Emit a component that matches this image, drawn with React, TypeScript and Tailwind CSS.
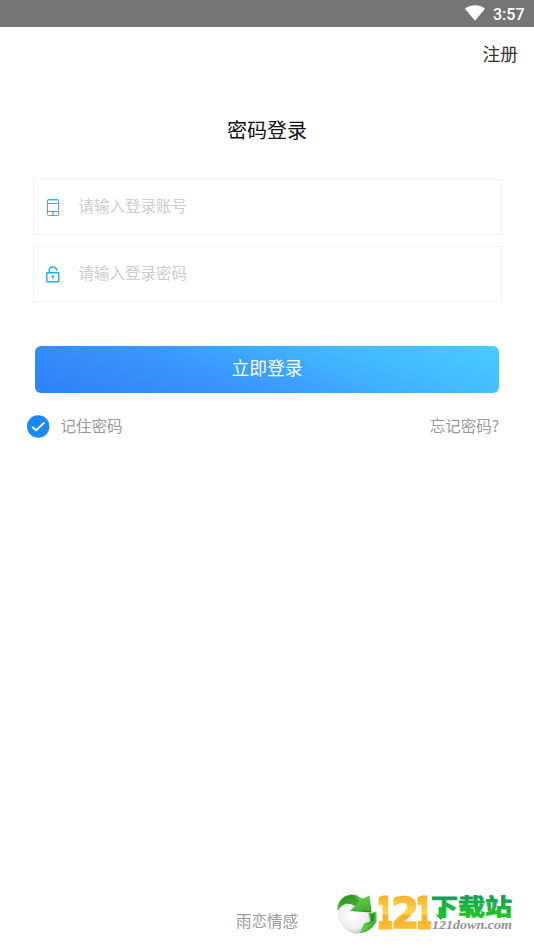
import React from 'react';

const PhoneIcon = () => (
  <svg width="12" height="17" viewBox="0 0 12 17" fill="none" stroke="#35abf8" className="mr-px shrink-0">
    <rect x="0.5" y="0.5" width="11" height="16" rx="1" strokeWidth="1" />
    <path d="M1 4.5H11M1 12.5H11" strokeWidth="1" />
    <path d="M1 1.5H11" strokeWidth="1" stroke="#a9dafc" />
    <path d="M6 13V16" strokeWidth="1.3" />
  </svg>
);

const LockIcon = () => (
  <svg width="14" height="17" viewBox="0 0 14 17" fill="none" stroke="#22a9fb" className="shrink-0">
    <rect x="0.8" y="6.7" width="12" height="9" rx="0.6" strokeWidth="1.4" />
    <path d="M3.2 6.5V4.8C3.2 2.5 4.8 1 6.9 1C8.8 1 10.4 2.1 10.8 4.4" strokeWidth="1.4" strokeLinecap="round" />
    <path d="M6.8 10V13.2" strokeWidth="1.2" />
    <path d="M5.4 10.2H8.2" strokeWidth="1.6" />
  </svg>
);

const Field = ({ icon, label }: { icon: React.ReactNode; label: string }) => (
  <div className="flex h-14 items-center border border-[#f2f2f2]">
    <div className="flex h-full w-[38px] items-center justify-center pt-px">{icon}</div>
    <span className="mb-[5px] ml-[6.5px] text-[15.5px] leading-6 text-[#cccccc]">{label}</span>
  </div>
);

const SiteLogo = () => (
  <svg width="180" height="50" viewBox="335 889 180 50" className="overflow-visible">
    <defs>
      <radialGradient id="ball" cx="0.4" cy="0.45" r="0.62">
        <stop offset="0" stopColor="#ffffff" />
        <stop offset="0.65" stopColor="#eeeeee" />
        <stop offset="1" stopColor="#b5b5b5" />
      </radialGradient>
      <linearGradient id="leaf" x1="0" y1="0" x2="1" y2="1">
        <stop offset="0" stopColor="#1d7b14" />
        <stop offset="0.5" stopColor="#65cc4c" />
        <stop offset="1" stopColor="#168817" />
      </linearGradient>
      <linearGradient id="gold" gradientUnits="userSpaceOnUse" x1="0" y1="-33" x2="0" y2="0">
        <stop offset="0" stopColor="#f6b22c" />
        <stop offset="0.55" stopColor="#ffd650" />
        <stop offset="0.62" stopColor="#f8b023" />
        <stop offset="1" stopColor="#fcbd35" />
      </linearGradient>
      <linearGradient id="green" gradientUnits="userSpaceOnUse" x1="0" y1="896" x2="0" y2="919">
        <stop offset="0" stopColor="#129e5b" />
        <stop offset="1" stopColor="#1dcc18" />
      </linearGradient>
    </defs>
    <path d="M338 906C344 900 358 900 366 908L375 918C371 930 363 934 355 933.5C347 932 340 926 338 917Z" fill="url(#ball)" />
    <path d="M337.5 911C336.5 903 342 896 349 895C353 894 356 894.5 359 897L363 898.5L369.5 895.5L371.5 912.5L350 911L355 906C348 901.5 342 904 337.5 911Z" fill="url(#leaf)" />
    <path d="M341 901C344 897 349 895 354 896L360 901L355 906C349 902 343 903 339 907Z" fill="#2c9a1f" opacity="0.7" />
    <path d="M359 901L369 898L370.5 911L355 909.5L361 905Z" fill="#54bd3c" opacity="0.7" />
    <path d="M368.5 913.5L376.5 911.5V921.5C372 929 367 933 359.5 933L364.5 923L370 921.5Z" fill="url(#leaf)" />
    <path d="M370.5 914.5L375 913L374 920.5L366 926L371 921Z" fill="#229318" />
    <g fill="url(#gold)" stroke="url(#gold)" className="font-['DejaVu_Sans',sans-serif] text-[43px] font-bold">
      <text transform="translate(377 928.4) scale(.53 1)" strokeWidth="3">1</text>
      <text transform="translate(390.9 928.4) scale(.95 1)" strokeWidth="1.4">2</text>
      <text transform="translate(416 928.4) scale(.53 1)" strokeWidth="3">1</text>
    </g>
    <text x="431" y="914.5" fill="url(#green)" stroke="url(#green)" strokeWidth="0.8" textLength="81" lengthAdjust="spacingAndGlyphs" className="font-['Noto_Sans_CJK_SC',sans-serif] text-[22.5px] font-bold">下载站</text>
    <path d="M438.6 907H443V914.5H446L440.8 920L435.5 914.5H438.6Z" fill="#20bd24" />
    <text x="432" y="929" fill="#929292" textLength="80" lengthAdjust="spacingAndGlyphs" className="font-['Liberation_Serif',serif] text-[13px] font-bold italic">121down.com</text>
  </svg>
);

export default function App() {
  return (
    <main className="flex h-[949px] w-full flex-col overflow-hidden bg-white font-['Noto_Sans_CJK_SC',sans-serif]">
      <header className="flex h-[27px] shrink-0 items-center justify-end bg-[#757575] pr-[9.5px] text-white">
        <svg width="20" height="16" viewBox="0 0 20 16" className="mr-2 mb-px">
          <path d="M0 3.7C5.5-.8 14.5-.8 20 3.7L10 15.8Z" fill="currentColor" />
        </svg>
        <span className="pt-[2px] font-[Roboto,sans-serif] text-base leading-5 font-medium">3:57</span>
      </header>
      <nav className="flex h-[53px] shrink-0 items-center justify-end pr-4 pb-[2px] text-[17.8px] text-[#333333]">
        <button className="leading-6">注册</button>
      </nav>
      <h1 className="mt-[34px] h-8 text-center text-[20px] leading-8 text-[#111111]">密码登录</h1>
      <section className="mt-[33px] mr-8 ml-[33px] flex flex-col gap-[11px]">
        <Field icon={<PhoneIcon />} label="请输入登录账号" />
        <Field icon={<LockIcon />} label="请输入登录密码" />
      </section>
      <button className="mt-11 mr-[35px] ml-[35px] h-[47px] shrink-0 rounded-md bg-[linear-gradient(20deg,#2f82fb_0%,#3894fb_36%,#43b7ff_70%,#48caff_100%)] pb-[5px] text-[17.8px] leading-6 text-white">立即登录</button>
      <div className="mt-[21px] mr-[35px] ml-[27px] flex h-6 items-center text-[15.5px] leading-6 text-[#999999]">
        <svg width="23" height="23" viewBox="0 0 23 23" className="shrink-0">
          <circle cx="11.2" cy="11.5" r="11.2" fill="#1989fa" />
          <path d="M5.3 12L9.1 15.3L17.4 7.6" fill="none" stroke="white" strokeWidth="1.9" />
        </svg>
        <span className="mb-[3px] ml-[10.5px]">记住密码</span>
        <button className="mb-[3px] ml-auto leading-6">忘记密码?</button>
      </div>
      <footer className="mt-auto mb-[10px] flex h-[50px] shrink-0 items-center justify-end pr-[19px]">
        <span className="mt-[12px] mr-[37px] text-[15.5px] leading-6 text-[#999999]">雨恋情感</span>
        <SiteLogo />
      </footer>
    </main>
  );
}
